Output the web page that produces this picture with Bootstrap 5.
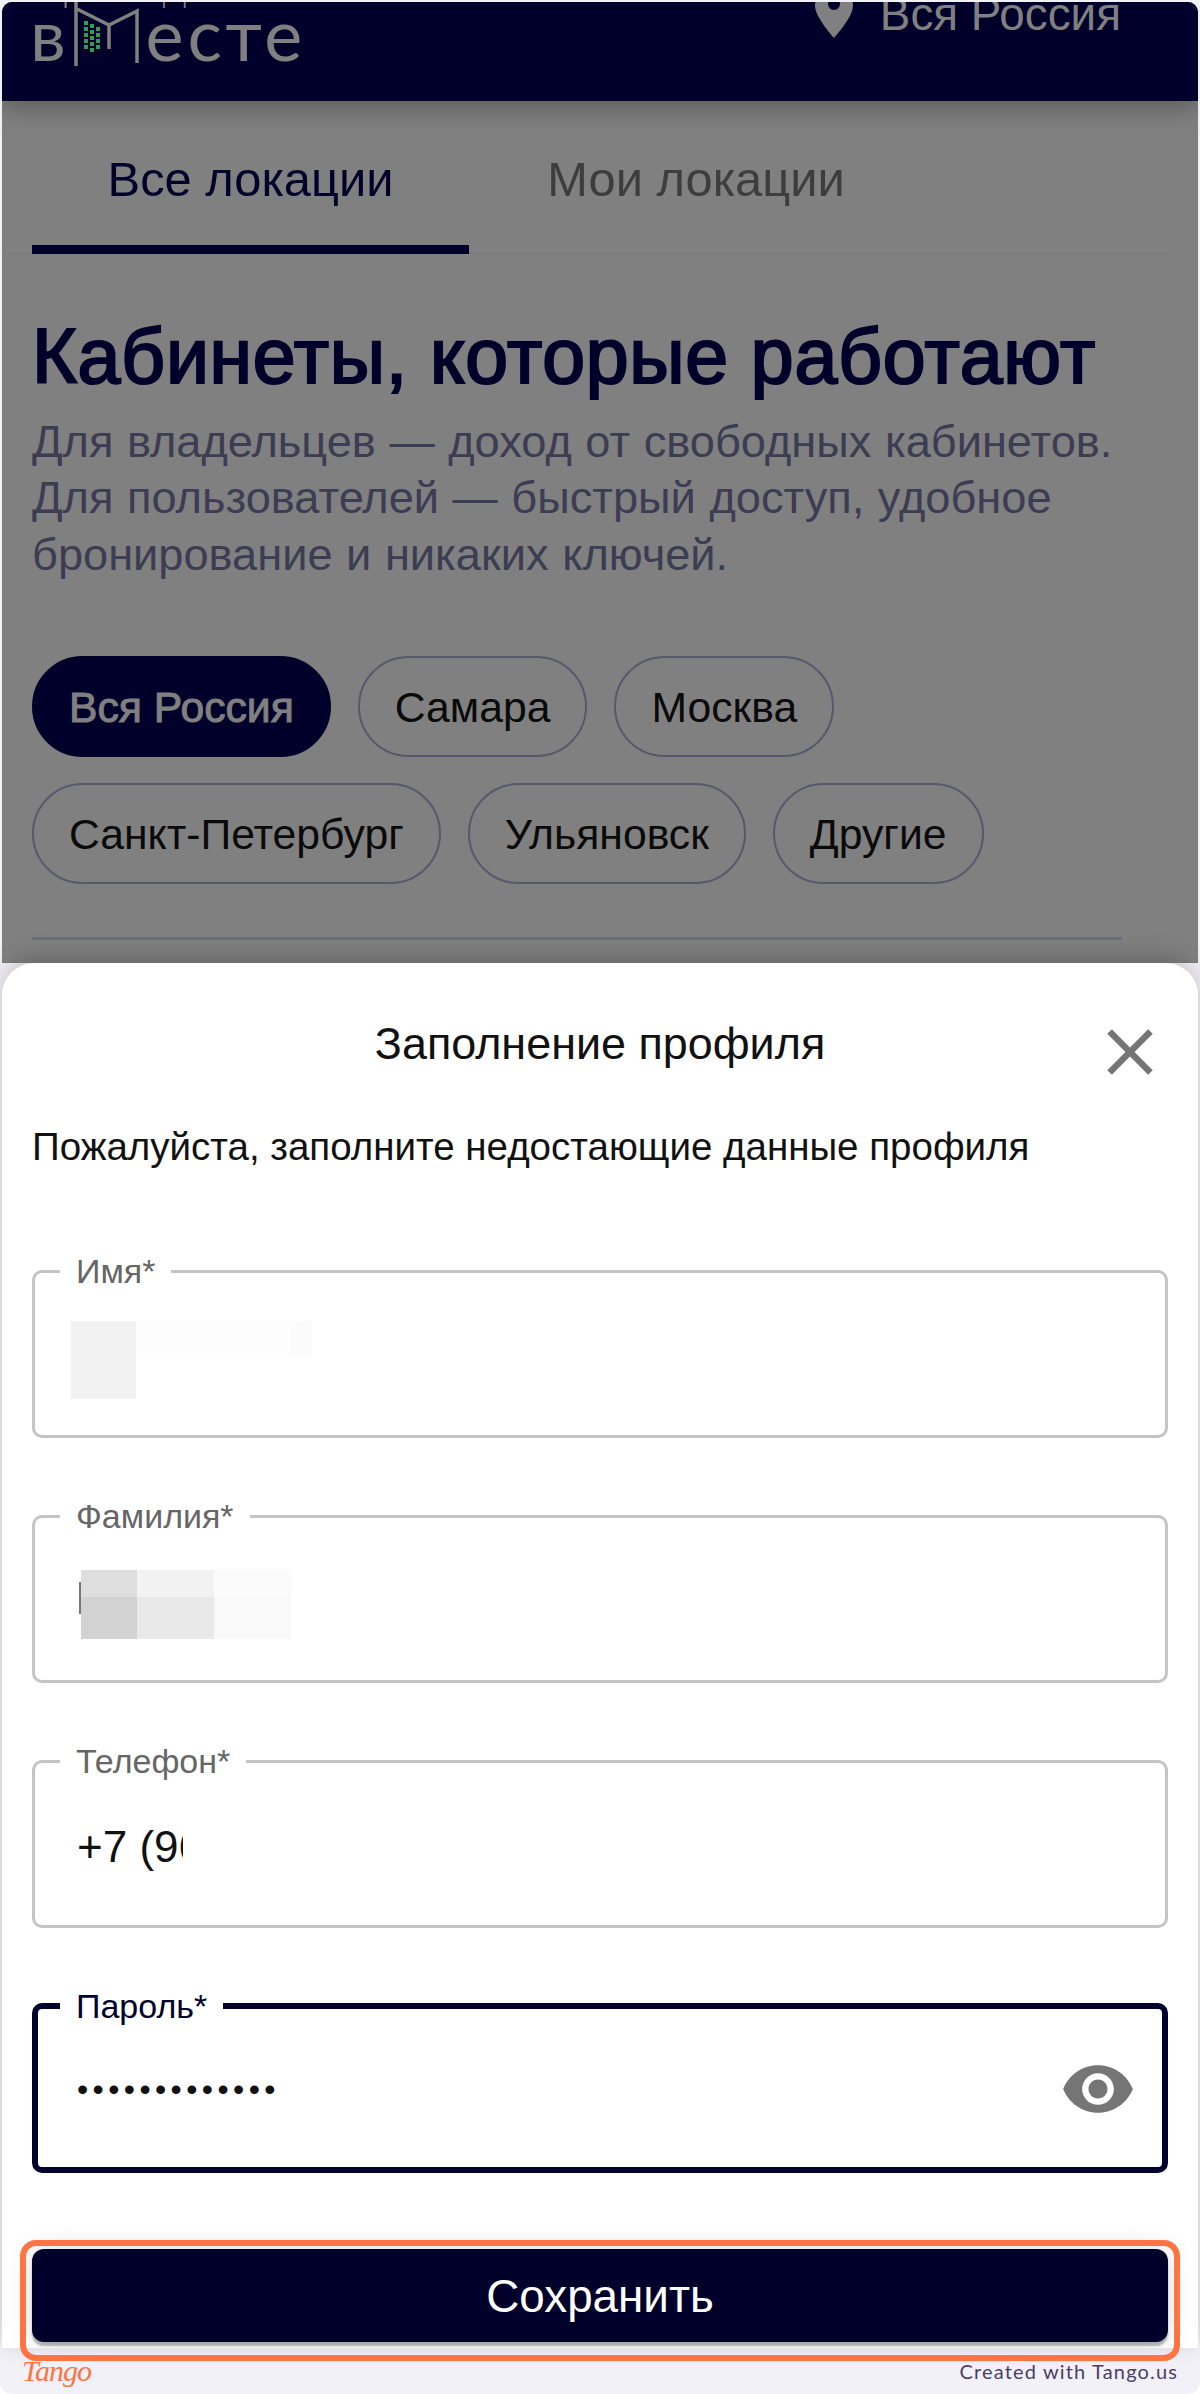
<!DOCTYPE html>
<html lang="ru">
<head>
    <meta charset="UTF-8">
    <meta name="viewport" content="width=device-width, initial-scale=1.0">
    <title>Заполнение профиля</title>
    <link href="https://cdn.jsdelivr.net/npm/bootstrap@5.3.0/dist/css/bootstrap.min.css" rel="stylesheet">
    <script src="https://cdn.jsdelivr.net/npm/bootstrap@5.3.0/dist/js/bootstrap.bundle.min.js"></script>
    <style>
        body { background: #fff; font-family: "Liberation Sans", Arial, sans-serif; color: #111; }
        .page-frame { width: 1200px; height: 2394px; padding: 2px 2px 0; background: #f3f1f8; border-radius: 0 0 12px 12px; overflow: hidden; display: flex; flex-direction: column; }

        /* dimmed page behind the sheet */
        .backdrop { height: 961px; background: #808080; border-radius: 10px 10px 0 0; overflow: hidden; }
        .top-bar { height: 99px; background: #00002a; color: #808080; padding: 0 77px 0 28px; box-shadow: 0 6px 24px rgba(0,0,0,.3); position: relative; overflow: hidden; }
        .logo-cut { font-size: 40px; line-height: 40px; margin-top: -36px; font-family: "Lato", sans-serif; font-weight: 300; letter-spacing: 12px; white-space: nowrap; }
        .logo-word { font-family: "Lato", sans-serif; font-weight: 400; font-size: 72px; line-height: 60px; letter-spacing: 3.8px; margin-top: -3px; }
        .logo-mark { width: 70px; height: 64px; flex: none; margin: -4px 4px 0 2px; }
        .region { font-size: 45.8px; line-height: 46px; margin-top: -10px; gap: 27px; }
        .region svg { margin-top: 8px; }
        .loc-tabs { height: 153px; padding: 0 30px; border-bottom: 1px solid #7c7c7c; margin-right: 26px; }
        .loc-tabs .nav-link { width: 454px; height: 153px; padding: 5px 0 0; margin: 0; border: 0; border-radius: 0; font-size: 48.8px; color: #3d3d3d; display: flex; align-items: center; justify-content: center; background: none; }
        .loc-tabs .nav-link.active { width: 437px; color: #00002a; border-bottom: 9px solid #00002a; padding-top: 14px; }
        .promo { padding: 0 30px; }
        .promo h1 { font-size: 77px; line-height: 84px; font-weight: 400; -webkit-text-stroke: 2.2px #00002a; letter-spacing: .7px; color: #00002a; margin: 60px 0 0; white-space: nowrap; }
        .promo p { font-size: 45.2px; line-height: 56.4px; color: #3c3c52; margin: 16px 0 0; white-space: nowrap; word-spacing: 1px; }
        .chips { gap: 26px 27px; margin-top: 73px; }
        .chip { height: 101px; padding: 0 35px; border: 2.5px solid #58586c; border-radius: 51px; font-size: 42.7px; color: #0a0a0a; background: none; display: flex; align-items: center; }
        .chip.active { background: #00002a; border-color: #00002a; color: #808080; -webkit-text-stroke: 1px #808080; }
        .promo hr { margin: 53px 46px 0 0; border: 0; border-top: 3px solid #6e6e7a; opacity: 1; }

        /* bottom sheet */
        .sheet-wrap { position: relative; height: 1385px; }
        .sheet { height: 100%; background: #fff; border-radius: 32px 32px 0 0; padding: 0 30px; overflow: hidden; box-shadow: 0 -6px 24px rgba(0,0,0,.2); }
        .sheet-head { height: 162px; position: relative; }
        .sheet-title { font-size: 44.9px; line-height: 50px; text-align: center; padding-top: 56px; color: #111; }
        .sheet-close { position: absolute; right: -1px; top: 50px; width: 78px; height: 78px; padding: 0; border: 0; background: none; }
        .sheet-note { font-size: 38.5px; line-height: 44px; margin: 0; color: #111; white-space: nowrap; }
        .profile-form { margin-top: 85px; }
        .outlined { border: 3px solid #c4c4c4; border-radius: 10px; padding: 0 42px; height: 184px; margin: 0 0 61px; min-width: 0; }
        .outlined legend { float: none; width: auto; font-size: 34px; line-height: 34px; color: #666; padding: 0 16px; margin: 0 0 0 -17px; }
        .outlined .form-control { border: 0; border-radius: 0; padding: 0; background: none; box-shadow: none; font-family: "Liberation Sans", Arial, sans-serif; font-size: 44px; line-height: 60px; height: 60px; color: #111; }
        .outlined.focused { border: 6px solid #00002a; padding: 0 39px; margin: 2px 0 76px; }
        .outlined.focused legend { color: #00002a; }
        /* smaller dots, same pitch as the reference */
        .outlined.focused .form-control { font-size: 32px; letter-spacing: 4.4px; }
        .field-row { margin-top: 36px; position: relative; }
        .mask-grid { display: flex; height: 78px; margin-top: 33px; margin-left: -6px; }
        .mask-grid.second { height: 69px; margin-top: 37px; margin-left: 2px; }
        .mask-grid i { display: block; }
        .caret-mark { width: 2px; height: 32px; margin-top: 12px; background: #777; }
        .phone-val { width: 106px; overflow: hidden; margin-top: 39px; }
        .phone-val .form-control { width: 300px; }
        .eye-btn { position: absolute; right: -13px; top: -8px; border: 0; background: none; padding: 0; width: 76px; height: 76px; }
        .save-btn { background: #00002a; color: #fff; border: 0; border-radius: 12px; height: 93px; padding-top: 9px; font-size: 45.8px; box-shadow: 0 4px 2px rgba(0,0,0,.28), 0 0 28px rgba(0,0,0,.14); }
        .save-btn:hover, .save-btn:active { background: #00002a !important; color: #fff !important; }
        .highlight { position: absolute; left: 18px; right: 18px; bottom: -13px; height: 121px; border: 6px solid #ff7442; border-radius: 16px; pointer-events: none; }

        /* tango strip */
        .tango-strip { flex: 1; padding: 0 20px; position: relative; }
        .tango-logo { font-family: "Liberation Serif", serif; font-style: italic; font-size: 30px; line-height: 34px; letter-spacing: -1px; color: #ff7442; margin-top: 6px; }
        .tango-note { font-family: "Lato", sans-serif; font-size: 20px; line-height: 24px; letter-spacing: 1.15px; color: #4a3f66; margin-top: 11px; }
    </style>
</head>
<body>
<div class="page-frame">
    <div class="backdrop">
        <div class="top-bar d-flex justify-content-between align-items-start">
            <div>
                <div class="logo-cut">аренда</div>
                <div class="d-flex align-items-start">
                    <span class="logo-word">в</span>
                    <svg class="logo-mark" viewBox="0 0 70 64" fill="none" stroke="#808080" stroke-width="3.5">
                        <path d="M4 0v64M3 6l34 17 28-14v52M37 23v24"/>
                        <g fill="#2f9e4f" stroke="none">
                            <rect x="12" y="19" width="4" height="4"/><rect x="12" y="25" width="4" height="4"/><rect x="12" y="31" width="4" height="4"/><rect x="12" y="37" width="4" height="4"/><rect x="12" y="43" width="4" height="4"/>
                            <rect x="18" y="22" width="4" height="4"/><rect x="18" y="28" width="4" height="4"/><rect x="18" y="34" width="4" height="4"/><rect x="18" y="40" width="4" height="4"/><rect x="18" y="46" width="4" height="4"/>
                            <rect x="24" y="25" width="4" height="4"/><rect x="24" y="31" width="4" height="4"/><rect x="24" y="37" width="4" height="4"/><rect x="24" y="43" width="4" height="4"/>
                        </g>
                    </svg>
                    <span class="logo-word">есте</span>
                </div>
            </div>
            <div class="region d-flex align-items-start">
                <svg width="38" height="38" viewBox="0 0 38 38"><path fill="#808080" fill-rule="evenodd" d="M19-12C8-12 0-4 0 6c0 11 19 32 19 32s19-21 19-32C38-4 30-12 19-12zm0 22a6 6 0 1 1 0-12 6 6 0 0 1 0 12z"/></svg>
                <span>Вся Россия</span>
            </div>
        </div>
        <ul class="nav loc-tabs">
            <li class="nav-item"><a class="nav-link active" href="#">Все локации</a></li>
            <li class="nav-item"><a class="nav-link" href="#">Мои локации</a></li>
        </ul>
        <div class="promo">
            <h1>Кабинеты, которые работают</h1>
            <p>Для владельцев — доход от свободных кабинетов.<br>Для пользователей — быстрый доступ, удобное<br>бронирование и никаких ключей.</p>
            <div class="chips d-flex flex-wrap">
                <button class="chip active" type="button">Вся Россия</button>
                <button class="chip" type="button">Самара</button>
                <button class="chip" type="button">Москва</button>
                <button class="chip" type="button">Санкт-Петербург</button>
                <button class="chip" type="button">Ульяновск</button>
                <button class="chip" type="button">Другие</button>
            </div>
            <hr>
        </div>
    </div>

    <div class="sheet-wrap">
        <div class="sheet d-flex flex-column">
            <div class="sheet-head">
                <div class="sheet-title">Заполнение профиля</div>
                <button class="sheet-close" type="button" aria-label="Закрыть">
                    <svg width="78" height="78" viewBox="0 0 24 24"><path fill="#757575" d="M19 6.41 17.59 5 12 10.59 6.41 5 5 6.41 10.59 12 5 17.59 6.41 19 12 13.41 17.59 19 19 17.59 13.41 12z"/></svg>
                </button>
            </div>
            <p class="sheet-note">Пожалуйста, заполните недостающие данные профиля</p>
            <form class="profile-form">
                <fieldset class="outlined">
                    <legend>Имя*</legend>
                    <div class="mask-grid">
                        <i style="width:65px;background:#f2f2f2"></i>
                        <i style="width:155px;height:36px;background:#fdfdfd"></i>
                        <i style="width:20px;height:36px;background:#fbfbfb"></i>
                    </div>
                </fieldset>
                <fieldset class="outlined">
                    <legend>Фамилия*</legend>
                    <div class="mask-grid second">
                        <i class="caret-mark"></i>
                        <i style="width:56px;background:linear-gradient(#dedede 27px,#d2d2d2 27px)"></i>
                        <i style="width:77px;background:linear-gradient(#f2f2f2 27px,#e9e9e9 27px)"></i>
                        <i style="width:77px;background:linear-gradient(#fbfbfb 27px,#f9f9f9 27px)"></i>
                    </div>
                </fieldset>
                <fieldset class="outlined">
                    <legend>Телефон*</legend>
                    <div class="phone-val"><input class="form-control" type="text" value="+7 (96" aria-label="Телефон"></div>
                </fieldset>
                <fieldset class="outlined focused">
                    <legend>Пароль*</legend>
                    <div class="field-row">
                        <input class="form-control" type="password" value="1234567890123" aria-label="Пароль">
                        <button class="eye-btn" type="button" aria-label="Показать пароль">
                            <svg width="76" height="76" viewBox="0 0 24 24"><path fill="#757575" d="M12 4.5C7 4.5 2.73 7.61 1 12c1.73 4.39 6 7.5 11 7.5s9.27-3.11 11-7.5c-1.73-4.39-6-7.5-11-7.5zM12 17c-2.76 0-5-2.24-5-5s2.24-5 5-5 5 2.24 5 5-2.24 5-5 5zm0-8c-1.66 0-3 1.34-3 3s1.34 3 3 3 3-1.34 3-3-1.34-3-3-3z"/></svg>
                        </button>
                    </div>
                </fieldset>
                <button class="btn save-btn w-100" type="button">Сохранить</button>
            </form>
        </div>
        <div class="highlight"></div>
    </div>

    <div class="tango-strip d-flex justify-content-between align-items-start">
        <div class="tango-logo">Tango</div>
        <div class="tango-note">Created with Tango.us</div>
    </div>
</div>
</body>
</html>
